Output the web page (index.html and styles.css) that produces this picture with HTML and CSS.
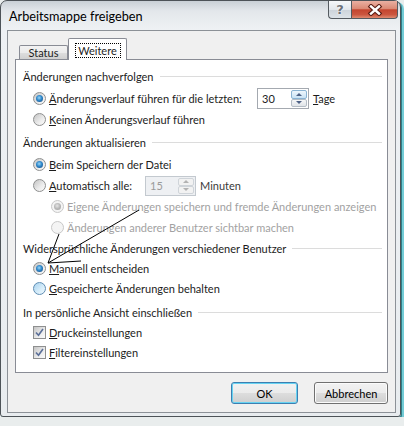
FILE: index.html
```html
<!DOCTYPE html>
<html lang="de">
<head>
    <meta charset="UTF-8">
    <title>Arbeitsmappe freigeben</title>
    <link rel="stylesheet" href="styles.css">
</head>
<body>
    <div class="window">
        <div class="titlebar">
            <span class="title">Arbeitsmappe freigeben</span>
            <div class="caption">
                <span class="cap help">?</span>
                <span class="cap close">
                    <svg width="16" height="12" viewBox="0 0 16 12">
                        <path d="M4 2.5 L12 9.5 M12 2.5 L4 9.5" stroke="#5a1d14" stroke-width="4.6" stroke-linecap="square" fill="none"/>
                        <path d="M4 2.5 L12 9.5 M12 2.5 L4 9.5" stroke="#fff" stroke-width="2.4" stroke-linecap="square" fill="none"/>
                    </svg>
                </span>
            </div>
        </div>

        <div class="client">
            <div class="tabs">
                <span class="tab">Status</span>
                <span class="tab active"><span class="focus">Weitere</span></span>
            </div>

            <div class="panel">
                <div class="group">
                    <div class="gtitle"><span>Änderungen nachverfolgen</span></div>
                    <div class="opt">
                        <span class="radio on"></span>
                        <span class="label-wide"><u>Ä</u>nderungsverlauf führen für die letzten:</span>
                        <span class="spin">
                            <span class="spin-val">30</span>
                            <span class="spin-btns"><span class="up hot"></span><span class="down"></span></span>
                        </span>
                        <span class="after"><u>T</u>age</span>
                    </div>
                    <div class="opt">
                        <span class="radio"></span>
                        <span><u>K</u>einen Änderungsverlauf führen</span>
                    </div>
                </div>

                <div class="group g2">
                    <div class="gtitle"><span>Änderungen aktualisieren</span></div>
                    <div class="opt">
                        <span class="radio on"></span>
                        <span><u>B</u>eim Speichern der Datei</span>
                    </div>
                    <div class="opt">
                        <span class="radio"></span>
                        <span class="label-auto"><u>A</u>utomatisch alle:</span>
                        <span class="spin disabled">
                            <span class="spin-val">15</span>
                            <span class="spin-btns"><span class="up"></span><span class="down"></span></span>
                        </span>
                        <span class="after dim">Minuten</span>
                    </div>
                    <div class="opt sub disabled">
                        <span class="radio on"></span>
                        <span>Eigene Änderungen speichern und fremde Änderungen anzeigen</span>
                    </div>
                    <div class="opt sub disabled">
                        <span class="radio"></span>
                        <span>Änderungen anderer Benutzer sichtbar machen</span>
                    </div>
                </div>

                <div class="group tight">
                    <div class="gtitle"><span>Widersprüchliche Änderungen verschiedener Benutzer</span></div>
                    <div class="opt">
                        <span class="radio on"></span>
                        <span><u>M</u>anuell entscheiden</span>
                    </div>
                    <div class="opt">
                        <span class="radio hot"></span>
                        <span><u>G</u>espeicherte Änderungen behalten</span>
                    </div>
                </div>

                <div class="group tight g4">
                    <div class="gtitle"><span>In persönliche Ansicht einschließen</span></div>
                    <div class="opt">
                        <span class="check">
                            <svg width="11" height="11" viewBox="0 0 11 11"><path d="M2 5.5 L4.5 8.3 L9 2" stroke="#5b6f98" stroke-width="1.6" fill="none"/></svg>
                        </span>
                        <span><u>D</u>ruckeinstellungen</span>
                    </div>
                    <div class="opt">
                        <span class="check">
                            <svg width="11" height="11" viewBox="0 0 11 11"><path d="M2 5.5 L4.5 8.3 L9 2" stroke="#5b6f98" stroke-width="1.6" fill="none"/></svg>
                        </span>
                        <span><u>F</u>iltereinstellungen</span>
                    </div>
                </div>
            </div>

            <div class="actions">
                <button class="btn ok">OK</button>
                <button class="btn cancel">Abbrechen</button>
            </div>
        </div>
    </div>

    <!-- hand-drawn arrow on top of the dialog -->
    <svg class="scribble" width="404" height="426" viewBox="0 0 404 426">
        <path d="M139 210 L48 263 M59 234 L48 263 L81 261" stroke="#000" stroke-width="1" fill="none"/>
    </svg>
</body>
</html>
```

FILE: styles.css
```css
body {
    margin: 0;
    background: #e9eded;
    font-family: Lato, "Noto Sans", sans-serif;
    font-size: 11px;
    color: #1c1c1c;
}

.window {
    width: 401px;
    height: 417px;
    box-sizing: border-box;
    border: 1px solid #4d5358;
    border-radius: 7px 7px 3px 3px;
    background: linear-gradient(#c9d0d6, #e3e7eb 10px, #eef1f4 28px, #e8ecef);
    display: flex;
    flex-direction: column;
    box-shadow: 1px 1px 0 #2f7f88, 3px 2px 0 #74ccd6;
}

.titlebar {
    height: 29px;
    flex: none;
    display: flex;
    align-items: flex-start;
}

.title {
    flex: 1;
    margin: 8px 0 0 8px;
    font-size: 12.7px;
    line-height: 14px;
    color: #000;
}

.caption {
    display: flex;
    margin-right: 2px;
}

.cap {
    height: 18px;
    box-sizing: border-box;
    border: 1px solid #545a60;
    border-top: none;
    display: flex;
    align-items: center;
    justify-content: center;
}

.cap.help {
    width: 23px;
    border-right: none;
    border-radius: 0 0 0 4px;
    background: linear-gradient(#f6f8fa, #e2e7ec 50%, #ccd3da 52%, #dde3e8);
    font: bold 13px "DejaVu Sans", sans-serif;
    color: #6c727a;
    text-shadow: 0 0 2px #fff, 0 0 1px #fff;
}

.cap.close {
    width: 47px;
    border-radius: 0 0 4px 0;
    background: linear-gradient(#eab0a2, #db8a75 45%, #c4452f 52%, #cb563f 80%, #df8a70);
}

.client {
    flex: 1;
    margin: 0 4px 3px 6px;
    border: 1px solid #8c9197;
    background: #f0f0f0;
    padding: 7px 7px 8px;
    display: flex;
    flex-direction: column;
}

.tabs {
    height: 22px;
    display: flex;
    align-items: flex-end;
    padding-left: 4px;
    margin-bottom: -1px;
    position: relative;
    z-index: 1;
}

.tab {
    width: 49px;
    height: 14px;
    margin-bottom: 1px;
    box-sizing: border-box;
    border: 1px solid #898c95;
    border-bottom: none;
    border-radius: 2px 2px 0 0;
    background: linear-gradient(#f3f3f3, #ebebeb 50%, #dedede 51%, #d0d0d0);
    display: flex;
    align-items: center;
    justify-content: center;
    line-height: 12px;
}

.tab.active {
    width: 59px;
    height: 22px;
    margin-bottom: 0;
    background: #fff;
    align-items: flex-start;
    padding-top: 4px;
}

.focus {
    width: 46px;
    height: 15px;
    box-sizing: border-box;
    border: 1px dotted #000;
    text-align: center;
    line-height: 13px;
}

.panel {
    height: 314px;
    box-sizing: border-box;
    border: 1px solid #898c95;
    background: #fff;
    padding: 6px 5px 0 7px;
}

.gtitle {
    height: 20px;
    margin-bottom: 2px;
    display: flex;
    align-items: center;
    white-space: nowrap;
}

.gtitle::after {
    content: "";
    flex: 1;
    height: 1px;
    margin-left: 6px;
    background: #dcdcdc;
}

.g2 {
    margin-top: 2px;
}

.g4 {
    margin-top: 4px;
}

.tight .gtitle {
    margin-bottom: 0;
}

.opt {
    height: 21px;
    padding-left: 10px;
    display: flex;
    align-items: center;
    white-space: nowrap;
}

.tight .opt {
    height: 20px;
}

.opt.sub {
    padding-left: 28px;
}

.opt.disabled {
    color: #a2a2a2;
}

.radio,
.check {
    width: 13px;
    height: 13px;
    flex: none;
    margin-right: 3px;
    box-sizing: border-box;
    border: 1px solid #8e8f8f;
    background: linear-gradient(135deg, #c4c4c4, #ececec 60%, #fafafa);
    position: relative;
}

.radio {
    border-radius: 50%;
}

.radio.on::after {
    content: "";
    position: absolute;
    inset: 2px;
    border-radius: 50%;
    background: radial-gradient(circle at 45% 40%, #9ad6f7 0, #2f88cb 45%, #123f74 100%);
}

.radio.hot {
    border-color: #5f8db3;
    background: linear-gradient(135deg, #a9d3ef, #d7edfa 60%, #eef8fe);
}

.disabled .radio {
    border-color: #c8c8c8;
    background: #f4f4f4;
}

.disabled .radio.on::after {
    background: radial-gradient(circle at 45% 40%, #e6e6e6 0, #b8b8b8 50%, #9c9c9c 100%);
}

.check {
    display: flex;
    align-items: center;
    justify-content: center;
}

.label-wide {
    width: 208px;
}

.label-auto {
    width: 96px;
}

.after {
    margin-left: 4px;
}

.after.dim {
    color: #3a3a3a;
}

.spin {
    width: 52px;
    height: 21px;
    box-sizing: border-box;
    border: 1px solid #a4a9b0;
    background: #fff;
    display: flex;
}

.spin-val {
    flex: 1;
    padding-left: 4px;
    display: flex;
    align-items: center;
}

.spin-btns {
    width: 16px;
    padding: 1px 1px 1px 0;
    display: flex;
    flex-direction: column;
}

.spin-btns span {
    flex: 1;
    border: 1px solid #b4bcc5;
    border-radius: 2px;
    background: linear-gradient(#f6f7f8, #e0e4e8);
    display: flex;
    align-items: center;
    justify-content: center;
}

.spin-btns span.hot {
    border-color: #8ab3d3;
    background: linear-gradient(#eef6fc, #c9e2f4);
}

.spin-btns .up::before,
.spin-btns .down::before {
    content: "";
    border-left: 3px solid transparent;
    border-right: 3px solid transparent;
}

.spin-btns .up::before {
    border-bottom: 3px solid #4d6185;
}

.spin-btns .down::before {
    border-top: 3px solid #4d6185;
}

.spin.disabled {
    width: 51px;
    height: 20px;
    border-color: #c3c9cf;
    background: #eef0f3;
    color: #9a9a9a;
}

.spin.disabled .spin-btns span {
    border-color: #cfd4d9;
    background: #f2f2f2;
}

.spin.disabled .up::before {
    border-bottom-color: #b2b2b2;
}

.spin.disabled .down::before {
    border-top-color: #b2b2b2;
}

.actions {
    margin-top: 9px;
    display: flex;
    justify-content: flex-end;
    gap: 16px;
}

.btn {
    height: 22px;
    padding: 0;
    box-sizing: border-box;
    border: 1px solid #707070;
    border-radius: 3px;
    background: linear-gradient(#f2f2f2, #ebebeb 50%, #dddddd 51%, #cfcfcf);
    box-shadow: inset 0 0 0 1px #fbfbfb;
    font: inherit;
    color: #000;
}

.btn.ok {
    width: 67px;
    border-color: #3c7fb1;
    box-shadow: inset 0 0 0 1px #67d3f2;
}

.btn.cancel {
    width: 74px;
}

.scribble {
    position: absolute;
    left: 0;
    top: 0;
    pointer-events: none;
}
```
